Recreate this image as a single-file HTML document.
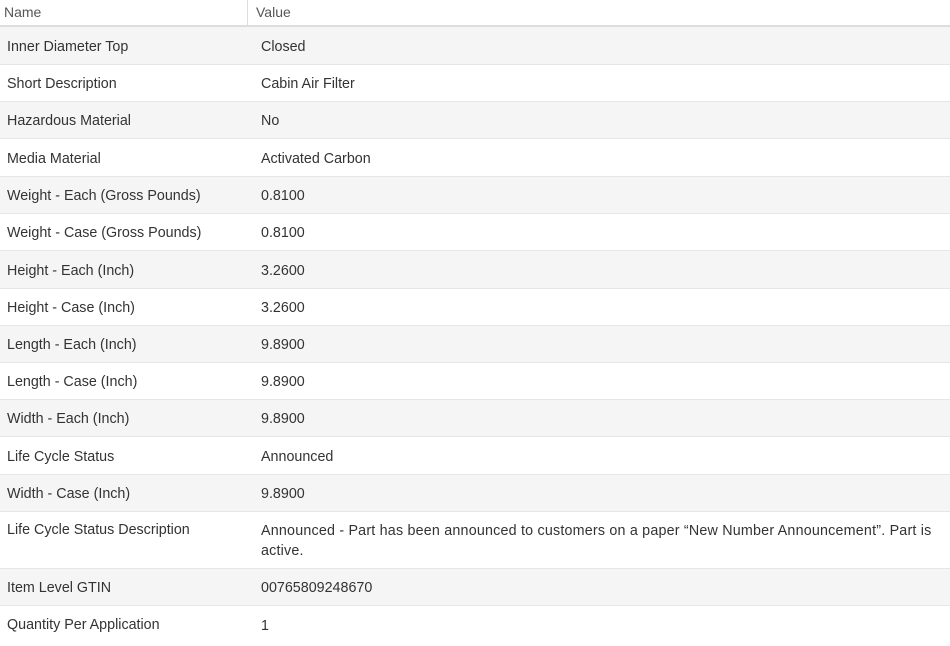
<!DOCTYPE html>
<html><head><meta charset="utf-8"><style>
body{margin:0;width:950px;height:638px;overflow:hidden;background:#fff;font-family:"Liberation Sans",Arial,sans-serif;color:#333;font-size:14.3px}
.h{position:absolute;left:0;top:0;width:950px;height:25px;border-bottom:2px solid #ddd;color:#555;font-size:14px}
.h span{position:absolute;top:4px}
.h .d{position:absolute;left:247px;top:0;width:1px;height:25px;background:#ddd}
.r{position:absolute;left:0;width:950px;box-sizing:border-box;border-bottom:1px solid #e6e6e6}
.r.g{background:#f5f5f5}
.r .n{position:absolute;left:7px;top:calc(50% + 1px);transform:translateY(-50%);white-space:nowrap}
.r .v{position:absolute;left:261px;top:calc(50% + 1px);transform:translateY(-50%);white-space:nowrap;line-height:20px}
</style></head><body>
<div class="h"><span style="left:4px">Name</span><div class="d"></div><span style="left:256px">Value</span></div>
<div class="r g" style="top:27px;height:38px"><span class="n">Inner Diameter Top</span><span class="v">Closed</span></div>
<div class="r" style="top:65px;height:37px"><span class="n">Short Description</span><span class="v">Cabin Air Filter</span></div>
<div class="r g" style="top:102px;height:37px"><span class="n">Hazardous Material</span><span class="v">No</span></div>
<div class="r" style="top:139px;height:38px"><span class="n">Media Material</span><span class="v">Activated Carbon</span></div>
<div class="r g" style="top:177px;height:37px"><span class="n">Weight - Each (Gross Pounds)</span><span class="v">0.8100</span></div>
<div class="r" style="top:214px;height:37px"><span class="n">Weight - Case (Gross Pounds)</span><span class="v">0.8100</span></div>
<div class="r g" style="top:251px;height:38px"><span class="n">Height - Each (Inch)</span><span class="v">3.2600</span></div>
<div class="r" style="top:289px;height:37px"><span class="n">Height - Case (Inch)</span><span class="v">3.2600</span></div>
<div class="r g" style="top:326px;height:37px"><span class="n">Length - Each (Inch)</span><span class="v">9.8900</span></div>
<div class="r" style="top:363px;height:37px"><span class="n">Length - Case (Inch)</span><span class="v">9.8900</span></div>
<div class="r g" style="top:400px;height:37px"><span class="n">Width - Each (Inch)</span><span class="v">9.8900</span></div>
<div class="r" style="top:437px;height:38px"><span class="n">Life Cycle Status</span><span class="v">Announced</span></div>
<div class="r g" style="top:475px;height:37px"><span class="n">Width - Case (Inch)</span><span class="v">9.8900</span></div>
<div class="r" style="top:512px;height:57px"><span class="n" style="top:10px;transform:none">Life Cycle Status Description</span><span class="v" style="top:9px;transform:none;letter-spacing:0.2px">Announced - Part has been announced to customers on a paper “New Number Announcement”. Part is<br>active.</span></div>
<div class="r g" style="top:569px;height:37px"><span class="n">Item Level GTIN</span><span class="v">00765809248670</span></div>
<div class="r" style="top:606px;height:40px;border:none"><span class="n" style="top:11px;transform:none">Quantity Per Application</span><span class="v" style="top:10px;transform:none">1</span></div>
</body></html>
